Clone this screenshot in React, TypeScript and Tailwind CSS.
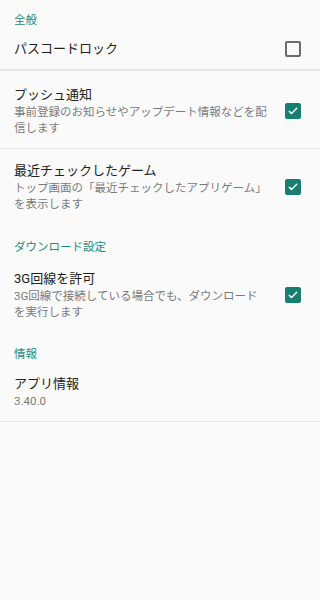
import React from "react";

const font = {
  fontFamily: '"Roboto", "Noto Sans CJK JP", sans-serif',
};

const CheckBox = ({ checked }: { checked: boolean }) =>
  checked ? (
    <div className="w-[16px] h-[16px] rounded-[2px] bg-[#177f6f] flex items-center justify-center shrink-0">
      <svg width="12" height="12" viewBox="0 0 24 24" fill="none">
        <path
          d="M4.5 12.5l4.5 4.5 10.5-10.5"
          stroke="#fff"
          strokeWidth="3"
          strokeLinecap="round"
          strokeLinejoin="round"
        />
      </svg>
    </div>
  ) : (
    <div className="w-[16px] h-[16px] rounded-[2px] border-2 border-[#6b6b6b] shrink-0" />
  );

const Header = ({ label, top = "pt-[14px]" }: { label: string; top?: string }) => (
  <div className={`px-[14px] ${top} text-[11.5px] leading-[16px] text-[#1d8c78]`}>
    {label}
  </div>
);

const Row = ({
  title,
  lines,
  checked,
}: {
  title: string;
  lines?: string[];
  checked?: boolean;
}) => (
  <div className="flex items-center pl-[14px] pr-[19px]">
    <div className="flex-1">
      <div className="text-[13px] leading-[18px] text-[#212121]">{title}</div>
      {lines?.map((l) => (
        <div key={l} className="text-[11.5px] leading-[16px] text-[#7a7a7a] whitespace-nowrap">
          {l}
        </div>
      ))}
    </div>
    {checked !== undefined && <CheckBox checked={checked} />}
  </div>
);

export default function App() {
  return (
    <div className="w-[320px] h-[600px] bg-[#fafafa]" style={font}>
      <Header label="全般" top="pt-[12px]" />
      <div className="h-[41px] flex flex-col justify-center">
        <Row title="パスコードロック" checked={false} />
      </div>
      <div className="h-[2px] bg-[#e4e4e4]" />
      <div className="pt-[15px] pb-[12px]">
        <Row
          title="プッシュ通知"
          lines={["事前登録のお知らせやアップデート情報などを配", "信します"]}
          checked={true}
        />
      </div>
      <div className="h-px bg-[#e4e4e4]" />
      <div className="pt-[13px] pb-[13px]">
        <Row
          title="最近チェックしたゲーム"
          lines={["トップ画面の「最近チェックしたアプリゲーム」", "を表示します"]}
          checked={true}
        />
      </div>
      <Header label="ダウンロード設定" />
      <div className="pt-[15px] pb-[12px]">
        <Row
          title="3G回線を許可"
          lines={["3G回線で接続している場合でも、ダウンロード", "を実行します"]}
          checked={true}
        />
      </div>
      <Header label="情報" />
      <div className="pt-[13px] pb-[12px]">
        <Row title="アプリ情報" lines={["3.40.0"]} />
      </div>
      <div className="h-px bg-[#e4e4e4]" />
    </div>
  );
}
